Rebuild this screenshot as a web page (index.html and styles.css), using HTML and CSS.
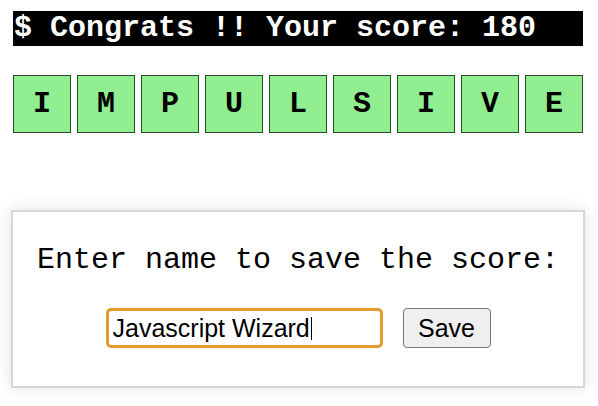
FILE: index.html
```html
<!DOCTYPE html>
<html>
<head>
<meta charset="utf-8">
<link rel="stylesheet" href="styles.css">
</head>
<body>
<div class="app">
  <div class="banner">$ Congrats !! Your score: 180</div>
  <div class="tiles">
    <div class="tile">I</div>
    <div class="tile">M</div>
    <div class="tile">P</div>
    <div class="tile">U</div>
    <div class="tile">L</div>
    <div class="tile">S</div>
    <div class="tile">I</div>
    <div class="tile">V</div>
    <div class="tile">E</div>
  </div>
  <div class="card">
    <div class="prompt">Enter name to save the score:</div>
    <div class="row">
      <div class="field">
        <input class="name" type="text" value="Javascript Wizard">
      </div>
      <button class="save">Save</button>
    </div>
  </div>
</div>
</body>
</html>
```
FILE: styles.css
```css
html, body {
  margin: 0;
  padding: 0;
  background: #ffffff;
}
.app {
  width: 574px;
  padding: 11px 11px;
}
.banner {
  margin: 0 2px;
  height: 35px;
  line-height: 35px;
  padding-left: 1px;
  background: #000000;
  color: #ffffff;
  font-family: "Courier New", "Liberation Mono", monospace;
  font-weight: bold;
  font-size: 30px;
  white-space: pre;
}
.tiles {
  display: flex;
  gap: 6px;
  margin: 29px 2px 0;
}
.tile {
  box-sizing: border-box;
  width: 58px;
  height: 58px;
  border: 1px solid #2f4a2f;
  background: #90ee90;
  display: flex;
  align-items: center;
  justify-content: center;
  font-family: "Courier New", "Liberation Mono", monospace;
  font-weight: bold;
  font-size: 30px;
  color: #000;
}
.card {
  margin-top: 77px;
  border: 2px solid #d6d6d6;
  box-shadow: 0 0 16px rgba(0, 0, 0, 0.12);
  background: #fff;
  padding: 31px 0 38px;
}
.prompt {
  text-align: center;
  font-family: "Courier New", "Liberation Mono", monospace;
  font-size: 30px;
  line-height: 34px;
  color: #000;
}
.row {
  margin-top: 31px;
  display: flex;
  justify-content: center;
  gap: 20px;
}
.field {
  position: relative;
  display: flex;
}
.field::after {
  content: "";
  position: absolute;
  left: 205px;
  top: 9px;
  width: 1px;
  height: 23px;
  background: #000;
}
.name {
  box-sizing: border-box;
  width: 277px;
  height: 40px;
  margin: 0;
  border: 3px solid #e39b2f;
  border-radius: 5px;
  padding: 0 4px;
  font-family: "Liberation Sans", Arial, sans-serif;
  font-size: 25px;
  color: #000;
  outline: none;
  background: #fff;
}
.save {
  box-sizing: border-box;
  width: 88px;
  height: 40px;
  margin: 0;
  border: 1px solid #767676;
  border-radius: 4px;
  background: #efefef;
  font-family: "Liberation Sans", Arial, sans-serif;
  font-size: 25px;
  color: #000;
  padding: 0;
}
```
